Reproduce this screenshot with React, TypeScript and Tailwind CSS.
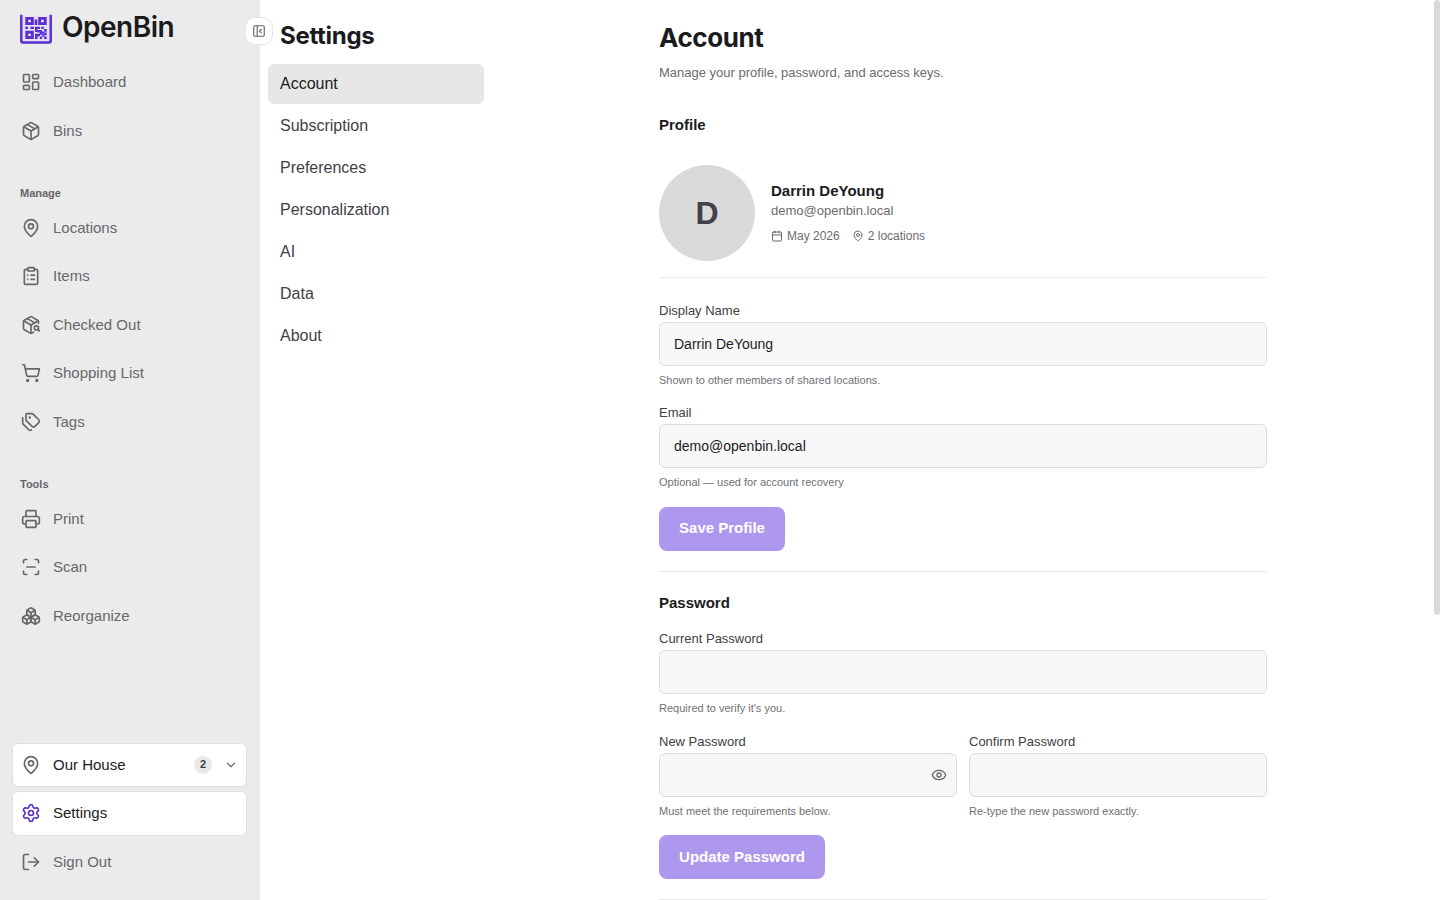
import type { ReactNode } from 'react';
import {
  Calendar, ChevronDown, ClipboardList, Eye, LayoutDashboard, LogOut, MapPin, Package,
  PackageSearch, PanelLeftClose, Printer, Settings, ShoppingCart, Tags, Boxes,
  type LucideIcon,
} from 'lucide-react';

function Scan({ size = 20 }: { size?: number }) {
  return (
    <svg width={size} height={size} viewBox="0 0 24 24" fill="none" stroke="currentColor" strokeWidth="2" strokeLinecap="round" strokeLinejoin="round">
      <path d="M3 7V5a2 2 0 0 1 2-2h2M17 3h2a2 2 0 0 1 2 2v2M21 17v2a2 2 0 0 1-2 2h-2M7 21H5a2 2 0 0 1-2-2v-2M7 12h10" />
    </svg>
  );
}

function Logo() {
  return (
    <svg width="32" height="30" viewBox="0 0 32 30" fill="#5b2fd0">
      <rect x="2" y="2" width="28" height="26" fill="#e6e0f6" />
      <path d="M0 1.7Q0 .6 1.2 .6T2.5 1.7V26.1Q2.5 27.3 3.7 27.3H28.3Q29.5 27.3 29.5 26.1V1.7Q29.5 .6 30.8 .6T32 1.7V26.8Q32 29.8 29 29.8H3Q0 29.8 0 26.8Z" />
      <path fillRule="evenodd" d="M5.3 3h8.5v8H5.3zM8.2 5.8v2.4h2.7V5.8zM18.2 3h8.5v8h-8.5zM21.1 5.8v2.4h2.7V5.8zM5.3 16.8h8.5v8.2H5.3zM8.2 19.7v2.4h2.7v-2.4z" />
      <path d="M14.7 5.6h2.6v5.4h-2.6zM5.3 12.7h2.7v2.4H5.3zM10.4 12.7H14v2.4h-3.6zM15 12.7h5v2.4h-2.6v2.8H15zM21.2 12.7h2.6v2.4h-2.6zM24.1 15h2.6v2.7h-2.6zM17.4 16h4.5v2.4h-4.5zM21.6 17.4h2.5v2.4h-2.5zM15 19.7h5v2.5h-2.4v2.8H15zM19.8 18.4h2.1v2.4h-2.1zM22 20.2h2.4v2.4H22zM24.1 18.6h2.6v2.6h-2.6zM19.8 22.4h2.4V25h-2.4zM24.1 22.4h2.6V25h-2.6z" />
    </svg>
  );
}

function NavItem({ icon: Icon, label }: { icon: LucideIcon | typeof Scan; label: string }) {
  return (
    <a className="flex h-[44.5px] items-center gap-3 px-[9px] text-[15px] text-[#68686b]">
      <Icon size={20} />
      <span>{label}</span>
    </a>
  );
}

function Group({ title, children }: { title: string; children: ReactNode }) {
  return (
    <div className="mt-[27.5px]">
      <h2 className="flex h-[25px] items-center px-2 text-[11px] font-bold text-[#66666a]">{title}</h2>
      <div className="flex flex-col gap-1">{children}</div>
    </div>
  );
}

function Field({ label, value, hint, icon }: { label: string; value?: string; hint: string; icon?: ReactNode }) {
  return (
    <div className="min-w-0 flex-1">
      <label className="flex h-5 items-center text-[13px] text-[#414145]">{label}</label>
      <div className="mt-px flex h-11 items-center justify-between rounded-md border border-[#dddddf] bg-[#f7f7f7] pr-[9px] pl-3.5 text-sm text-[#1c1c1f]">
        <span>{value}</span>
        {icon}
      </div>
      <p className="mt-1.5 text-[11px] leading-4 text-[#707073]">{hint}</p>
    </div>
  );
}

const sections = ['Account', 'Subscription', 'Preferences', 'Personalization', 'AI', 'Data', 'About'];

export default function App() {
  return (
    <div className="flex h-[900px] w-[1440px] overflow-hidden bg-white font-['Liberation_Sans',sans-serif] text-[#1b1b1e]">
      <aside className="relative flex w-[260px] shrink-0 flex-col bg-[#ebebeb] px-3">
        <div className="flex h-[60px] items-start gap-2.5 pt-3.5 pl-2">
          <Logo />
          <span className="-mt-[5px] font-['Inter',sans-serif] text-[28px] leading-9 font-semibold tracking-[-0.5px]">OpenBin</span>
        </div>
        <button className="absolute top-[17px] left-[245px] flex size-7 items-center justify-center rounded-[10px] border border-[#e4e4e7] bg-white text-[#68686b]">
          <PanelLeftClose size={14} />
        </button>
        <nav className="flex flex-col gap-1">
          <NavItem icon={LayoutDashboard} label="Dashboard" />
          <NavItem icon={Package} label="Bins" />
        </nav>
        <Group title="Manage">
          <NavItem icon={MapPin} label="Locations" />
          <NavItem icon={ClipboardList} label="Items" />
          <NavItem icon={PackageSearch} label="Checked Out" />
          <NavItem icon={ShoppingCart} label="Shopping List" />
          <NavItem icon={Tags} label="Tags" />
        </Group>
        <Group title="Tools">
          <NavItem icon={Printer} label="Print" />
          <NavItem icon={Scan} label="Scan" />
          <NavItem icon={Boxes} label="Reorganize" />
        </Group>
        <div className="mt-auto mr-px mb-4 flex flex-col gap-1">
          <div className="flex h-[44.5px] items-center gap-3 rounded-md border border-[#dfdfe1] bg-white px-2 text-[15px]">
            <MapPin size={20} className="text-[#68686b]" />
            <span>Our House</span>
            <span className="ml-auto flex size-[18px] items-center justify-center rounded-full bg-[#e8e8e8] pb-px text-[11px] font-bold text-[#414145]">2</span>
            <ChevronDown size={14} className="text-[#68686b]" />
          </div>
          <div className="flex h-[44.5px] items-center gap-3 rounded-md border border-[#dfdfe1] bg-white px-2 text-[15px]">
            <Settings size={20} className="text-[#5b2fd0]" />
            <span>Settings</span>
          </div>
          <NavItem icon={LogOut} label="Sign Out" />
        </div>
      </aside>

      <nav className="w-[232px] shrink-0 px-2 pt-4">
        <h1 className="mb-2 px-3 font-['Inter',sans-serif] text-2xl leading-10 font-bold tracking-[-0.3px]">Settings</h1>
        <div className="flex flex-col gap-0.5">
          {sections.map((name, i) => (
            <a key={name} className={i === 0 ? 'flex h-10 items-center rounded-md bg-[#e7e7e7] px-3 text-base text-[#1b1b1e]' : 'flex h-10 items-center px-3 text-base text-[#414145]'}>{name}</a>
          ))}
        </div>
      </nav>

      <main className="flex min-w-0 flex-1 justify-center overflow-hidden">
        <div className="w-[608px] pt-5">
          <h1 className="font-['Inter',sans-serif] text-[26px] leading-9 font-bold tracking-[-0.4px]">Account</h1>
          <p className="mt-[7px] text-[13px] leading-5 text-[#6b6b6e]">Manage your profile, password, and access keys.</p>
          <h2 className="mt-[31px] text-[15px] leading-[22px] font-bold">Profile</h2>

          <div className="mt-[29px] flex h-[113px] items-start gap-4 border-b border-[#ebebec]">
            <div className="flex size-24 items-center justify-center rounded-full bg-[#d9d9d9] text-[32px] font-bold text-[#414147]">D</div>
            <div className="pt-[15px]">
              <div className="text-[15px] leading-[22px] font-bold">Darrin DeYoung</div>
              <div className="text-[13px] leading-[18px] text-[#6b6b6e]">demo@openbin.local</div>
              <div className="mt-[7px] flex gap-3 text-xs leading-[18px] text-[#6b6b6e]">
                <span className="flex items-center gap-1"><Calendar size={12} />May 2026</span>
                <span className="flex items-center gap-1"><MapPin size={12} />2 locations</span>
              </div>
            </div>
          </div>

          <div className="border-b border-[#ebebec] pt-[23px] pb-5">
            <div className="flex flex-col gap-[15px]">
              <Field label="Display Name" value="Darrin DeYoung" hint="Shown to other members of shared locations." />
              <Field label="Email" value="demo@openbin.local" hint="Optional — used for account recovery" />
            </div>
            <button className="mt-[17px] flex h-11 w-[126px] items-center justify-center rounded-lg bg-[#ae98ed] pb-0.5 text-[15px] font-bold text-white">Save Profile</button>
          </div>

          <div className="border-b border-[#ebebec] pt-5 pb-5">
            <h2 className="text-[15px] leading-[22px] font-bold">Password</h2>
            <div className="mt-[15px] flex flex-col gap-4">
              <Field label="Current Password" hint="Required to verify it's you." />
              <div className="flex gap-3">
                <Field label="New Password" hint="Must meet the requirements below." icon={<Eye size={16} className="text-[#68686b]" />} />
                <Field label="Confirm Password" hint="Re-type the new password exactly." />
              </div>
            </div>
            <button className="mt-4 flex h-11 w-[166px] items-center justify-center rounded-lg bg-[#ae98ed] text-[15px] font-bold text-white">Update Password</button>
          </div>
        </div>
      </main>
      <div className="w-1.5 shrink-0">
        <div className="h-[615px] rounded-[3px] bg-[#d9d9d9]" />
      </div>
    </div>
  );
}
